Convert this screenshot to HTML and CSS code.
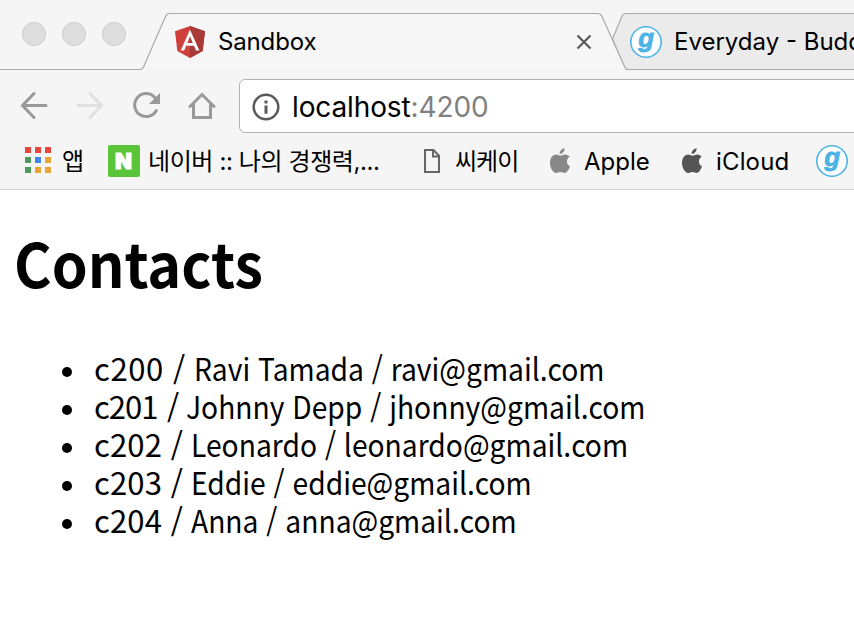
FILE: index.html
```html
<!DOCTYPE html>
<html lang="ko">
<head>
<meta charset="utf-8">
<title>Sandbox</title>
<link rel="stylesheet" href="styles.css">
</head>
<body>
<svg class="defs" width="0" height="0" aria-hidden="true">
  <symbol id="apple" viewBox="0 0 20 26">
    <path d="M14.6.3c.3 2.900-2 5.700-4.900 5.600C9.400 3.200 11.800.600 14.600.300zM10.200 7.700c1.200 0 2.800-1.300 5-1.300 1.900.1 3.500.9 4.400 2.300-3.900 2.500-3.200 8 .4 9.500-.9 2.500-2.900 6.600-5.300 6.700-1.700 0-2.300-1-4.200-1-2 0-2.600 1-4.300 1C2.900 24.900 0 19.500 0 14.900c0-5.100 2.900-8.300 6.100-8.400 1.700 0 3.100 1.200 4.100 1.200z"/>
  </symbol>
</svg>
<header class="browser">
  <div class="tabstrip">
    <svg class="tab-shapes" width="854" height="70" viewBox="0 0 854 70">
      <path class="tab-back" d="M854 69.500H628Q625.500 69.500 624.500 67.500L612.500 39L622 16Q623.300 13.500 625.500 13.500H854"/>
      <path class="tab-front" d="M0 69.500H140Q142.500 69.500 143.500 67L165.500 16.500Q167 13.500 169.500 13.500H598Q600.500 13.500 602 16.500L624.500 66.500Q625.800 69.500 628 69.500"/>
    </svg>
    <div class="lights"><i></i><i></i><i></i></div>
    <div class="tab active">
      <svg width="30" height="32" viewBox="0 0 30 32"><path fill="#d0403b" d="M15 0 30 5.300 27.700 25.100 15 32 2.300 25.100 0 5.300z"/><path fill="#a83a38" d="M15 0 30 5.300 27.700 25.100 15 32z"/><path fill="#fff" fill-rule="evenodd" d="M15 3.700 5.700 24.500h3.500l1.900-4.700h7.900l1.900 4.700h3.500zM15 10.300l2.800 6.600h-5.500z"/></svg>
      <span>Sandbox</span>
      <svg class="close" width="16" height="16" viewBox="0 0 16 16"><path d="M1.500 1.500 14.500 14.500M14.500 1.500 1.500 14.500"/></svg>
    </div>
    <div class="tab next">
      <svg class="glogo" width="32" height="32" viewBox="0 0 32 32"><circle cx="16" cy="16" r="15.200"/><text x="8.300" y="20.500">g</text></svg>
      <span>Everyday - Budd</span>
    </div>
  </div>
  <div class="toolbar">
    <svg class="nav" width="220" height="54" viewBox="0 0 220 54">
      <path d="M34 14.500 22.500 26.500 34 38.500M23 26.500H46"/>
      <path class="off" d="M90 14.500 101.500 26.500 90 38.500M101 26.500H78"/>
      <path d="M154.800 18.500A11.500 11.500 0 1 0 156.300 31.500" />
      <path class="solid" d="M160 14V25H149z"/>
      <path d="M190 27.500 202 15.500 214 27.500M193.500 26V38.500H210.500V26"/>
    </svg>
    <div class="omnibox">
      <svg width="28" height="28" viewBox="0 0 28 28"><circle cx="14" cy="14" r="12.300"/><path fill="#5a5a5a" d="M12.500 7.500h3v3h-3zM12.500 12.500h3v8.300h-3z"/></svg>
      <span class="url">localhost<span class="port">:4200</span></span>
    </div>
  </div>
  <nav class="bookmarks">
    <div class="apps"><i></i><i></i><i></i><i></i><i></i><i></i><i></i><i></i><i></i></div>
    <span class="label l-apps">앱</span>
    <svg class="naver" width="32" height="32" viewBox="0 0 32 32"><rect width="32" height="32" rx="2"/><text x="7" y="24">N</text></svg>
    <span class="label l-naver">네이버 :: 나의 경쟁력,...</span>
    <svg class="page-icon" width="16" height="24" viewBox="0 0 16 24"><path d="M1 1H9.500L15 6.700V23H1zM9 1V7.500H15"/></svg>
    <span class="label l-ck">씨케이</span>
    <svg class="apple-icon" width="20" height="26"><use href="#apple"/></svg>
    <span class="label l-apple">Apple</span>
    <svg class="apple-icon dark" width="20" height="26"><use href="#apple"/></svg>
    <span class="label l-icloud">iCloud</span>
    <svg class="glogo" width="32" height="32" viewBox="0 0 32 32"><circle cx="16" cy="16" r="15.200"/><text x="8.300" y="20.500">g</text></svg>
  </nav>
</header>
<main>
  <h1>Contacts</h1>
  <ul>
    <li><span class="id wide">c200 /</span><span class="who">Ravi Tamada / ravi@gmail.com</span></li>
    <li><span class="id slim">c201 /</span><span class="who">Johnny Depp / jhonny@gmail.com</span></li>
    <li><span class="id">c202 /</span><span class="who">Leonardo / leonardo@gmail.com</span></li>
    <li><span class="id">c203 /</span><span class="who">Eddie / eddie@gmail.com</span></li>
    <li><span class="id">c204 /</span><span class="who">Anna / anna@gmail.com</span></li>
  </ul>
</main>
</body>
</html>
```
FILE: styles.css
```css
* { box-sizing: border-box; }
body {
  margin: 0;
  width: 854px;
  height: 632px;
  overflow: hidden;
  background: #fff;
  color: #000;
  font-family: Inter, "Noto Sans CJK KR", sans-serif;
}
svg { display: block; flex: none; }
span { white-space: nowrap; }
.defs { position: absolute; }
.browser { height: 190px; background: #f5f5f5; border-bottom: 1px solid #d4d4d4; overflow: hidden; }

.tabstrip { position: relative; display: flex; height: 70px; }
.tab-shapes { position: absolute; left: 0; top: 0; }
.tab-shapes path { stroke: #aaa; stroke-width: 1.2; }
.tab-back { fill: #ebebeb; }
.tab-front { fill: #f6f6f6; }
.lights { display: flex; flex: none; gap: 16px; padding: 22px 0 0 22px; width: 175px; position: relative; }
.lights i { width: 24px; height: 24px; border-radius: 50%; background: #dedede; border: 1px solid #cbcbcb; }
.tab { position: relative; display: flex; align-items: center; height: 32px; margin-top: 26px; font-size: 24px; flex: none; }
.tab span { padding-bottom: 2px; }
.active { width: 455px; }
.active span { margin-left: 13px; letter-spacing: -.15px; }
.close { margin-left: auto; margin-right: 38px; }
.close path { stroke: #5a5a5a; stroke-width: 2.2; }
.next span { margin-left: 12px; }
.glogo circle { fill: #fff; stroke: #4cb4e5; stroke-width: 1.6; }
.glogo text { font: italic 700 26px "Liberation Sans", sans-serif; fill: #4cb4e5; stroke: #4cb4e5; stroke-width: .8; }

.toolbar { display: flex; height: 63px; padding-top: 9px; }
.nav { margin-right: 19px; }
.nav path { fill: none; stroke: #999; stroke-width: 3; stroke-linecap: round; stroke-linejoin: miter; }
.nav .off { stroke: #e0e0e0; }
.nav .solid { fill: #999; stroke: none; }
.omnibox { display: flex; align-items: center; width: 640px; height: 54px; flex: none; padding-left: 12px; background: #fff; border: 1px solid #b2b2b2; border-radius: 6px; }
.omnibox svg { margin-top: 1px; }
.omnibox circle { fill: none; stroke: #5a5a5a; stroke-width: 2.5; }
.url { margin-left: 12px; padding-top: 2px; font-size: 28px; letter-spacing: -.12px; }
.port { color: #808080; }

.bookmarks { display: flex; align-items: center; height: 56px; padding-left: 25px; }
.apps { display: grid; grid-template-columns: repeat(3, 6px); grid-auto-rows: 6px; gap: 4px; margin-top: -2px; }
.apps i { background: #e9453a; }
.apps i:nth-child(4), .apps i:nth-child(7) { background: #4f9a5a; }
.apps i:nth-child(5) { background: #3f86ed; }
.apps i:nth-child(6), .apps i:nth-child(n+8) { background: #e9a336; }
.label { font-size: 24px; line-height: 32px; padding-top: 2px; flex: none; }
.l-apps { width: 57px; padding-left: 11px; }
.naver rect { fill: #5ac539; }
.naver text { font: 900 22px Inter, sans-serif; fill: #fff; stroke: #fff; stroke-width: 1; }
.l-naver { width: 284px; padding-left: 8px; letter-spacing: -.4px; }
.page-icon path { fill: none; stroke: #666; stroke-width: 2; }
.l-ck { width: 110px; padding-left: 15px; letter-spacing: -1px; }
.apple-icon { fill: #888; }
.dark { fill: #555; }
.l-apple { width: 112px; padding-left: 14px; }
.l-icloud { width: 114px; padding-left: 14px; letter-spacing: .15px; }

main { padding-left: 14px; font-family: "Noto Sans CJK KR", sans-serif; }
h1 {
  margin: 36px 0 51px;
  height: 72px;
  line-height: 72px;
  font-size: 61px;
  font-weight: 700;
  transform: scaleX(.942);
  transform-origin: left;
}
ul { margin: 0; padding: 0 0 0 48px; list-style: none; font-size: 31px; }
li { display: flex; align-items: center; height: 38px; line-height: 32px; }
li::before { content: ""; width: 10px; height: 10px; margin: 8px 22px 0 0; border-radius: 50%; background: #000; }
.id { flex: none; width: 97px; letter-spacing: .15px; }
.wide { width: 100px; letter-spacing: .6px; }
.slim { width: 92px; letter-spacing: -1px; word-spacing: 2px; }
.who { transform: scaleX(.91); transform-origin: left; }
```
